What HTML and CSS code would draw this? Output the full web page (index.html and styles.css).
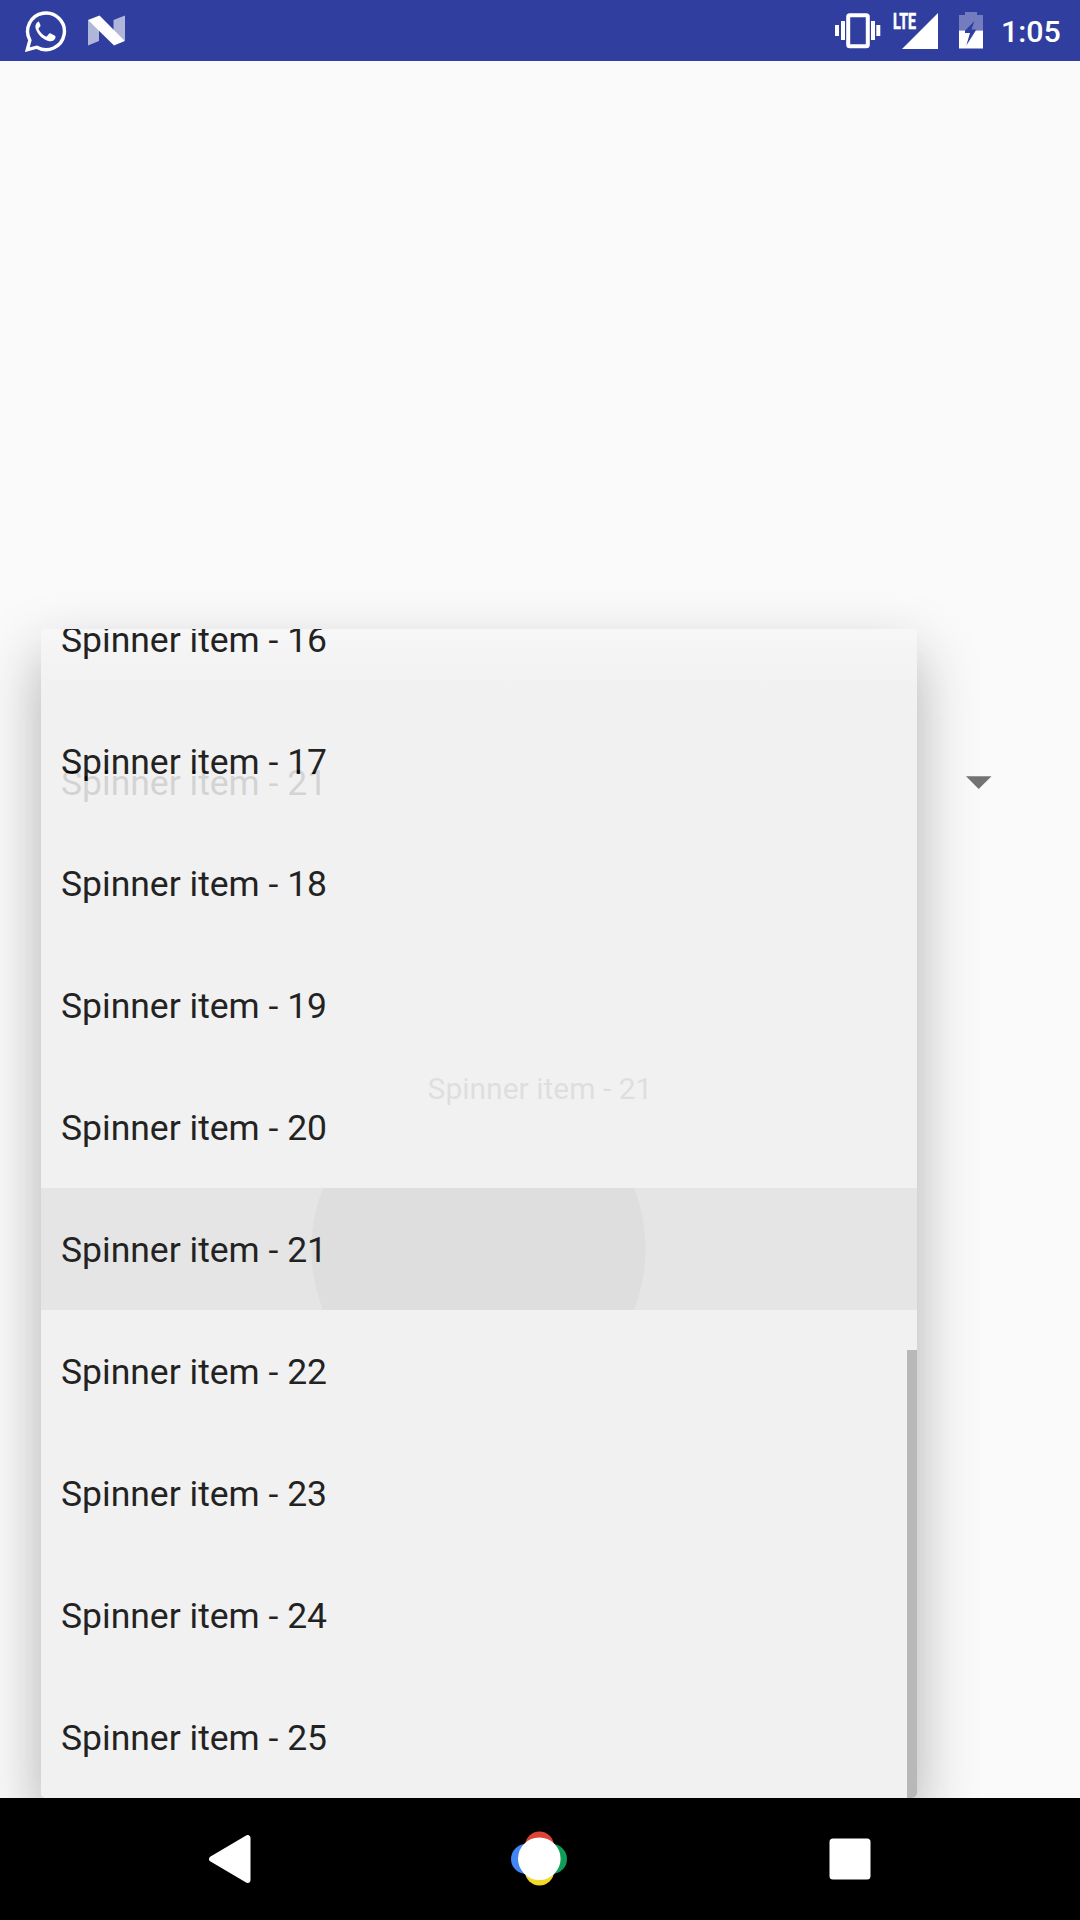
FILE: index.html
```html
<!DOCTYPE html>
<html lang="en">
<head>
<meta charset="utf-8">
<title>Spinner</title>
<link rel="stylesheet" href="styles.css">
</head>
<body>
<div class="screen">
  <header class="status">
    <div class="status-left">
      <svg class="chat" width="42" height="42" viewBox="0 0 42 42">
        <path d="M2.300 39.700 4.900 30.200A18.400 18.300 0 1 1 11.800 37.200Z" fill="none" stroke="#fff" stroke-width="3.400" stroke-linejoin="miter"/>
        <path d="M13.500 11.800c-3 1.400-3.700 4.600-2.500 7.800 2.100 5.700 7 10.200 13.200 11.600 2.700.6 5.400-.8 6.200-3.200.4-1.200.1-2-.8-2.500l-3.900-2c-.8-.4-1.400-.2-2 .6l-1.500 1.900c-.5.6-1 .6-1.700.3-3.100-1.500-5.300-3.900-6.800-6.700-.3-.6-.2-1 .2-1.500l1.300-1.700c.4-.5.4-1 .2-1.500l-1.300-3c-.3-.6-.6-.2-1.100-.2Z" fill="#fff"/>
      </svg>
      <svg class="nougat" width="38" height="32" viewBox="0 0 38 32">
        <path d="M0 5V30.500L11 26V12ZM25.500 5 37 .5V26L25.500 18Z" fill="#fff" fill-opacity=".62"/>
        <path d="M0 5 11.500 .5 36.800 26 26 30.500Z" fill="#fff"/>
      </svg>
    </div>
    <div class="status-right">
      <svg width="46" height="36" viewBox="0 0 46 36">
        <rect x="13.200" y="2.200" width="19.600" height="31" rx="1.500" fill="none" stroke="#fff" stroke-width="4"/>
        <path d="M0 12h4v11H0ZM6 8h4v19H6ZM36 8h4v19h-4ZM41.300 12h4v11h-4Z" fill="#fff"/>
      </svg>
      <svg class="signal" width="46" height="36" viewBox="0 0 46 36">
        <text class="lte" x="0" y="15.800" textLength="23" lengthAdjust="spacingAndGlyphs">LTE</text>
        <path d="M9 36 45 0V36Z" fill="#fff"/>
      </svg>
      <svg class="battery" width="24" height="37" viewBox="0 0 24 37">
        <path d="M0 3H6V0H18V3H24V18.500H16.500L17 17.500H12.500L15.500 9 6.200 18.500H0Z" fill="#fff" fill-opacity=".32"/>
        <path d="M0 18.500H6L6 21H11L7.300 33.500 16.800 18.500H24V36.500H0Z" fill="#fff"/>
      </svg>
      <span class="clock">1:05</span>
    </div>
  </header>
  <main class="content">
    <div class="spinner">
      <span>Spinner item - 21</span>
      <svg class="caret" width="26" height="13" viewBox="0 0 26 13"><path d="M0 .3H25.500L12.700 13Z" fill="#737373"/></svg>
    </div>
    <p class="selection">Spinner item - 21</p>
    <div class="dropdown">
      <ul class="items">
        <li>Spinner item - 16</li>
        <li>Spinner item - 17</li>
        <li>Spinner item - 18</li>
        <li>Spinner item - 19</li>
        <li>Spinner item - 20</li>
        <li class="pressed">Spinner item - 21</li>
        <li>Spinner item - 22</li>
        <li>Spinner item - 23</li>
        <li>Spinner item - 24</li>
        <li>Spinner item - 25</li>
      </ul>
      <div class="scrollbar"></div>
    </div>
  </main>
  <nav class="navbar">
    <svg width="42" height="48" viewBox="0 0 42 48"><path d="M3 24 38.600 3V45Z" fill="#fff" stroke="#fff" stroke-width="5.800" stroke-linejoin="round"/></svg>
    <svg class="home" width="56" height="56" viewBox="0 0 56 56">
      <circle cx="28.500" cy="15" r="14.500" fill="#db4437"/>
      <circle cx="15" cy="28" r="15" fill="#4285f4"/>
      <circle cx="41" cy="28" r="15" fill="#0f9d58"/>
      <circle cx="28.500" cy="40" r="14.500" fill="#f4d92b"/>
      <circle cx="28.300" cy="27.700" r="21.300" fill="#fff"/>
    </svg>
    <svg width="42" height="42" viewBox="0 0 42 42"><rect x=".5" y=".5" width="41" height="41" rx="3.500" fill="#fff"/></svg>
  </nav>
</div>
</body>
</html>
```

FILE: styles.css
```css
* { box-sizing: border-box; }

body {
  margin: 0;
  font-family: Roboto, sans-serif;
  background: #fafafa;
}

svg { display: block; }

.screen {
  width: 1080px;
  height: 1920px;
  display: flex;
  flex-direction: column;
  overflow: hidden;
}

.status {
  height: 61px;
  flex: none;
  display: flex;
  justify-content: space-between;
  background: #303f9f;
  color: #fff;
}

.status-left,
.status-right {
  display: flex;
  align-items: flex-start;
}

.status-left { padding: 10px 0 0 25px; gap: 21px; }
.nougat { margin-top: 5px; }
.status-right { padding: 13px 19px 0 0; }
.signal { margin-left: 12px; overflow: visible; }
.battery { margin: -1px 0 0 20px; }

.lte {
  font: 700 22px Roboto, sans-serif;
  fill: #fff;
  stroke: #fff;
  stroke-width: .6px;
}

.clock {
  margin-left: 18px;
  width: 60px;
  font-size: 30.3px;
  line-height: 37px;
  font-weight: 500;
}

.content {
  position: relative;
  flex: 1;
  overflow: hidden;
  background: #fafafa;
}

.spinner {
  margin: 661px 88px 0 61px;
  height: 122px;
  display: flex;
  align-items: center;
  justify-content: space-between;
  font-size: 35.5px;
  color: #212121;
}

.caret { margin-bottom: 2px; }

.selection {
  margin: 227px 0 0;
  font-size: 30px;
  line-height: 36px;
  text-align: center;
  color: #737373;
}

.dropdown {
  position: absolute;
  left: 41px;
  top: 568px;
  width: 876px;
  height: 1169px;
  border-radius: 5px;
  overflow: hidden;
  opacity: .862;
  background: linear-gradient(#f7f7f7, #f0f0f0 60px);
  box-shadow: 0 26px 58px rgba(0, 0, 0, .34);
}

.items {
  margin: -51px 0 0;
  padding: 0;
  list-style: none;
}

.items li {
  height: 122px;
  padding: 2px 20px 0;
  display: flex;
  align-items: center;
  font-size: 35.5px;
  color: #000;
}

.items .pressed {
  background:
    radial-gradient(circle at 437.500px 61px, rgba(0, 0, 0, .037) 166.500px, transparent 167.500px),
    rgba(0, 0, 0, .056);
}

.scrollbar {
  position: absolute;
  right: 0;
  top: 721px;
  width: 10px;
  height: 448px;
  background: #aeaeae;
}

.navbar {
  height: 122px;
  flex: none;
  padding: 0 209px;
  display: flex;
  align-items: center;
  justify-content: space-between;
  background: #000;
}

.home {
  margin: 0 2px 1px 0;
}
```
